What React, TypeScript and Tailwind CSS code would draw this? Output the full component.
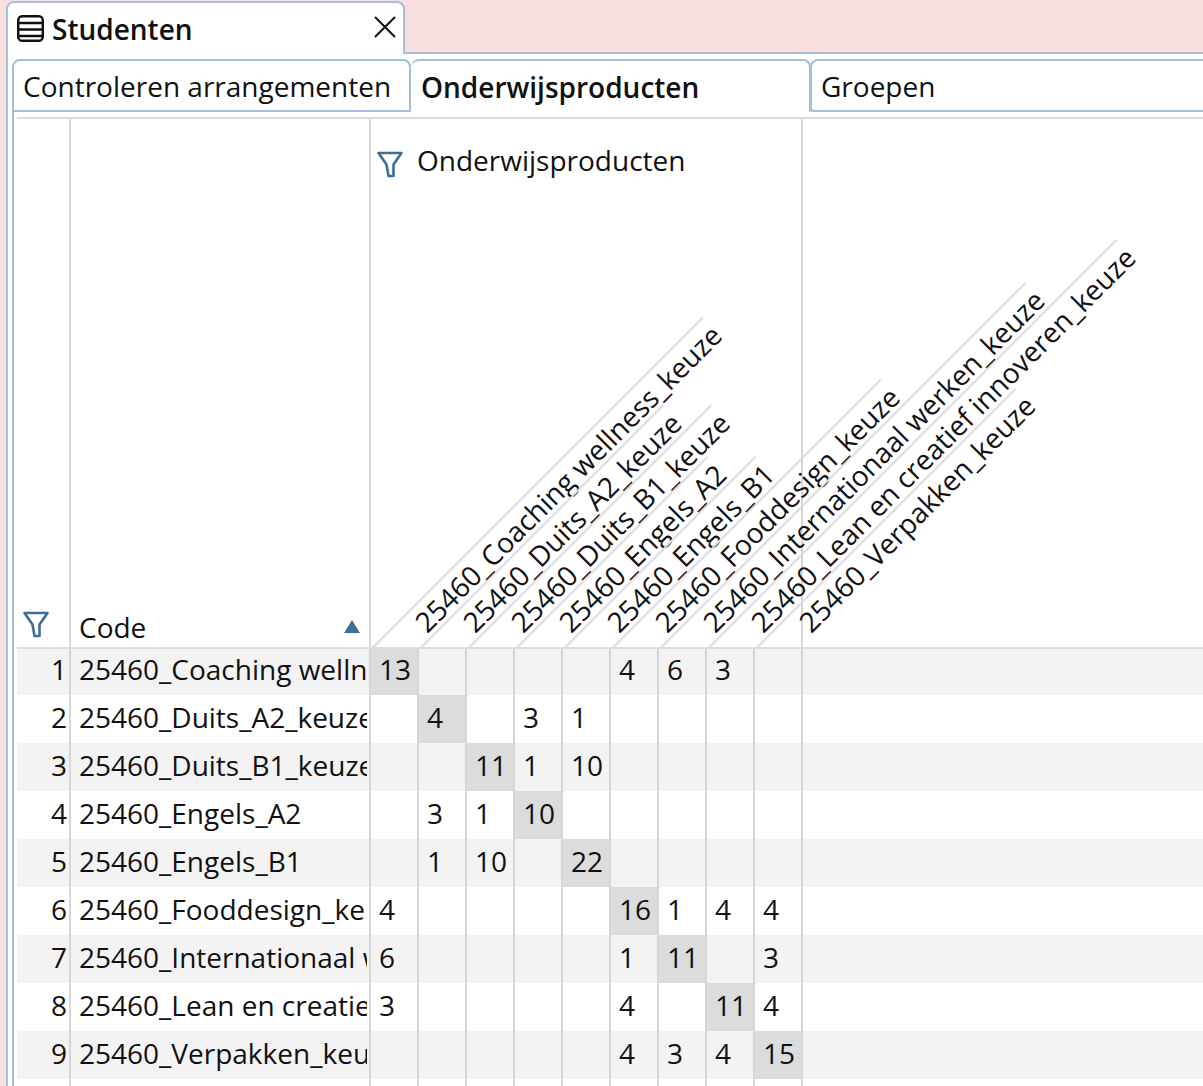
const FONT = "font-['Open_Sans',sans-serif]";

const heads = [
  { label: "25460_Coaching wellness_keuze", len: 467 },
  { label: "25460_Duits_A2_keuze", len: 343 },
  { label: "25460_Duits_B1_keuze", len: 343 },
  { label: "25460_Engels_A2", len: 270 },
  { label: "25460_Engels_B1", len: 270 },
  { label: "25460_Fooddesign_keuze", len: 379 },
  { label: "25460_Internationaal werken_keuze", len: 516 },
  { label: "25460_Lean en creatief innoveren_keuze", len: 577 },
  { label: "25460_Verpakken_keuze", len: 366 },
];

const rows: { code: string; cells: (number | null)[] }[] = [
  { code: "25460_Coaching wellness_keuze", cells: [13, null, null, null, null, 4, 6, 3, null] },
  { code: "25460_Duits_A2_keuze", cells: [null, 4, null, 3, 1, null, null, null, null] },
  { code: "25460_Duits_B1_keuze", cells: [null, null, 11, 1, 10, null, null, null, null] },
  { code: "25460_Engels_A2", cells: [null, 3, 1, 10, null, null, null, null, null] },
  { code: "25460_Engels_B1", cells: [null, 1, 10, null, 22, null, null, null, null] },
  { code: "25460_Fooddesign_keuze", cells: [4, null, null, null, null, 16, 1, 4, 4] },
  { code: "25460_Internationaal werken_keuze", cells: [6, null, null, null, null, 1, 11, null, 3] },
  { code: "25460_Lean en creatief innoveren_keuze", cells: [3, null, null, null, null, 4, null, 11, 4] },
  { code: "25460_Verpakken_keuze", cells: [null, null, null, null, null, 4, 3, 4, 15] },
];

const FilterIcon = () => (
  <svg className="shrink-0" width="26" height="27" viewBox="0 0 26 27" fill="none" stroke="#3f6f96" strokeWidth="2.6" strokeLinejoin="round">
    <path d="M1.5 2 H24.5 L16.5 13.5 V25 H11.5 L9.5 13.5 Z" />
  </svg>
);

const TableIcon = () => (
  <svg className="shrink-0" width="27" height="27" viewBox="0 0 27 27" fill="none" stroke="#111" strokeWidth="2.4">
    <rect x="1.2" y="1.2" width="24.6" height="24.6" rx="4" />
    <path d="M1 8 H26 M1 14.5 H26 M1 21 H26" />
  </svg>
);

const App = () => {
  return (
    <div className={`${FONT} w-[1203px] h-[1086px] overflow-hidden bg-[#f7e0df] text-[#111] flex flex-col pt-[1px] pl-[6px]`}>
      <div className="flex h-[53px] shrink-0">
        <div className="w-[399px] h-[53px] relative z-10 bg-white border-2 border-b-0 border-[#a3bfdc] rounded-t-lg flex items-center pl-[9px] pr-[7px] gap-[8px]">
          <TableIcon />
          <span className="text-[28px] font-semibold leading-none">Studenten</span>
          <svg className="ml-auto mb-[3px]" width="22" height="22" viewBox="0 0 22 22" stroke="#111" strokeWidth="2">
            <path d="M1 1 L21 21 M21 1 L1 21" />
          </svg>
        </div>
        <div className="flex-1 border-b-2 border-[#a3bfdc]" />
      </div>
      <div className="flex-1 bg-white border-l-2 border-[#a3bfdc] pl-[4px] flex flex-col min-h-0">
        <div className="flex h-[63px] shrink-0 pt-[5px] text-[28px] leading-none">
          <div className="w-[399px] h-[53px] border-2 border-[#a3bfdc] rounded-t-lg flex items-center pl-[9px]">Controleren arrangementen</div>
          <div className="w-[400px] -mr-px h-[53px] border-t-2 border-r-2 border-[#a3bfdc] rounded-t-lg flex items-center pl-[10px] font-semibold">Onderwijsproducten</div>
          <div className="flex-1 h-[53px] bg-white relative border-2 border-r-0 border-[#a3bfdc] rounded-tl-lg rounded-bl-sm flex items-center pl-[9px]">Groepen</div>
        </div>
        <div className="flex-1 min-h-0 border-l-2 border-[#a3bfdc] pl-[3px] -mt-[5px] pt-[5px] text-[28px]">
          <div className="border-t-2 border-[#dddad7] flex h-[530px]">
            <div className="w-[54px] border-r-2 border-[#d6d6d6] flex items-end pl-[6px] pb-[9px]"><FilterIcon /></div>
            <div className="w-[300px] border-r-2 border-[#d6d6d6] flex items-end justify-between pl-[8px] pr-[9px] leading-[40px]">
              <span>Code</span>
              <span className="mb-[14px] w-0 h-0 border-x-[8px] border-x-transparent border-b-[13px] border-b-[#3f6f96]" />
            </div>
            <div className="w-[432px] border-r-2 border-[#d6d6d6] relative">
              <div className="flex items-start gap-[14px] pl-[6px] pt-[23px] leading-[36px]">
                <span className="mt-[9px]"><FilterIcon /></span>
                <span>Onderwijsproducten</span>
              </div>
              {heads.map((h, i) => (
                <div key={h.label} style={{ left: i * 48 + 1, width: h.len }} className="absolute top-full h-[34px] origin-top-left -rotate-45 border-t-2 border-[#dcdcdc] leading-[35px] whitespace-nowrap pl-[48px]">
                  {h.label}
                </div>
              ))}
            </div>
          </div>
          <div className="relative">
            <div className="absolute top-0 inset-x-0 h-[2px] bg-[#dddddd]" />
            {rows.map((r, i) => (
              <div key={r.code} className={`flex h-[48px] ${i % 2 === 0 ? "bg-[#f3f3f3]" : "bg-white"}`}>
                <div className="w-[54px] border-r-2 border-[#d6d6d6] text-right pr-[2px] leading-[44px]">{i + 1}</div>
                <div className="w-[300px] border-r-2 border-[#d6d6d6] pl-[8px] leading-[44px]">
                  <div className="w-[288px] overflow-hidden whitespace-nowrap">{r.code}</div>
                </div>
                {r.cells.map((c, j) => (
                  <div key={j} className={`w-[48px] border-r-2 border-[#d6d6d6] leading-[44px] pl-[8px] ${i === j ? "bg-[#dcdcdc]" : ""}`}>{c}</div>
                ))}
              </div>
            ))}
            <div className="flex h-[10px]">
              <div className="w-[54px] border-r-2 border-[#d6d6d6]" />
              <div className="w-[300px] border-r-2 border-[#d6d6d6]" />
              {heads.map((h) => (
                <div key={h.label} className="w-[48px] border-r-2 border-[#d6d6d6]" />
              ))}
            </div>
          </div>
        </div>
      </div>
    </div>
  );
};

export default App;
